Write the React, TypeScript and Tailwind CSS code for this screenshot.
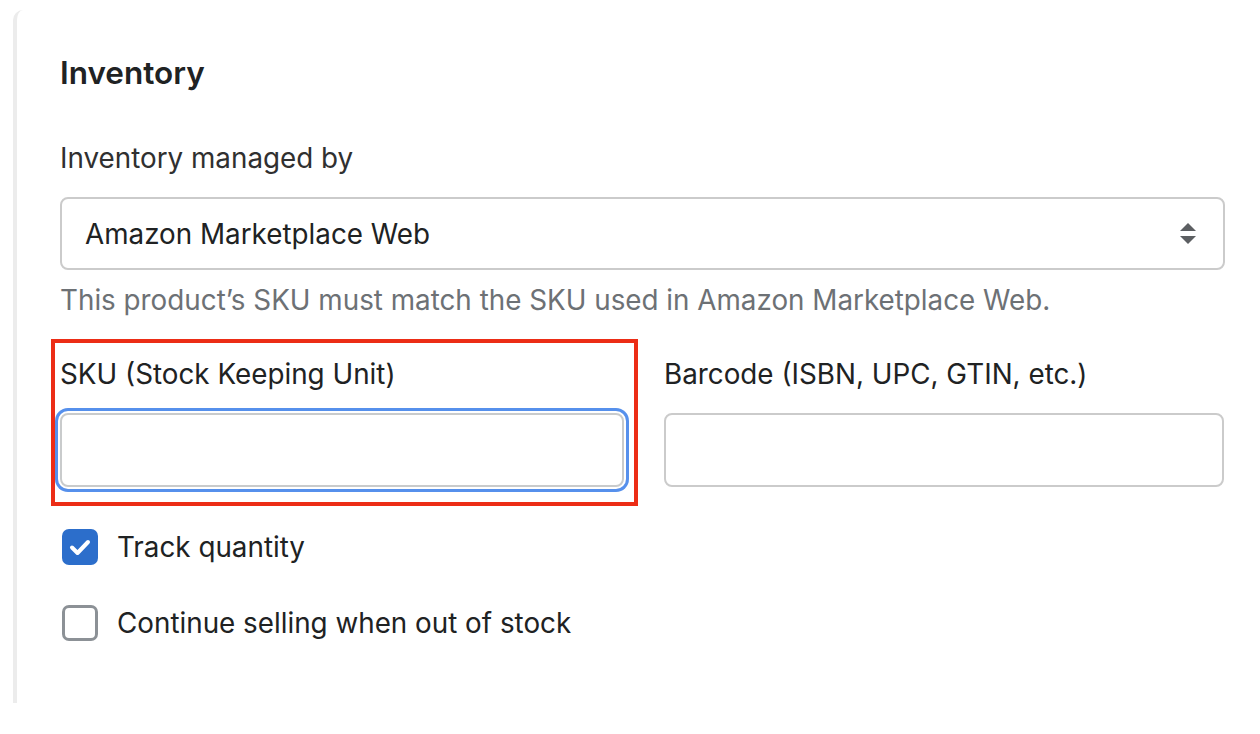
export default function App() {
  return (
    <div
      className="min-h-[734px] w-[1260px] bg-white pl-[13px] pt-[10px] text-[#202223]"
      style={{ fontFamily: "Inter, 'Liberation Sans', sans-serif" }}
    >
      <div className="h-[693px] rounded-tl-[10px] border-l-[4px] border-[#ececec] pl-[43px] pr-[35px] pt-[45px]">
        <h2 className="text-[31.5px] font-semibold leading-[36px]">Inventory</h2>

        <label className="mt-[51px] block text-[27.8px] leading-[32px] text-[#303030]">
          Inventory managed by
        </label>
        <div className="mt-[23px] flex h-[73px] items-center justify-between rounded-[8px] border-2 border-[#cbcbcb] pl-[23px] pr-[26px]">
          <span className="text-[27.8px] leading-[32px]">Amazon Marketplace Web</span>
          <svg width="18" height="26" viewBox="0 0 18 26" fill="#5c5f62">
            <path d="M9 2 L17 10 L1 10 Z" />
            <path d="M1 15 L17 15 L9 23 Z" />
          </svg>
        </div>
        <p className="mt-[14px] text-[27.8px] leading-[32px] text-[#6d7175]">
          This product’s SKU must match the SKU used in Amazon Marketplace Web.
        </p>

        <div className="mt-[42px] grid grid-cols-[564px_560px] gap-x-[40px]">
          <div className="relative">
            <div className="pointer-events-none absolute -bottom-[19px] -left-[9px] -right-[14px] -top-[19px] border-[4px] border-[#ec2d16]" />
            <label className="block text-[27.8px] leading-[32px]">SKU (Stock Keeping Unit)</label>
            <input
              className="mt-[23px] block h-[74px] w-full rounded-[8px] border-2 border-[#c9cbcc] bg-white px-4 text-[26px] outline-none ring-[3px] ring-[#5690ec] ring-offset-2"
              type="text"
            />
          </div>
          <div>
            <label className="block text-[27.8px] leading-[32px]">Barcode (ISBN, UPC, GTIN, etc.)</label>
            <input
              className="mt-[23px] block h-[74px] w-full rounded-[8px] border-2 border-[#cbcbcb] bg-white px-4 text-[26px] outline-none"
              type="text"
            />
          </div>
        </div>

        <div className="mt-[42px] flex flex-col gap-[40px] pl-[2px]">
          <label className="flex items-center gap-[19px]">
            <span className="flex h-[36px] w-[36px] items-center justify-center rounded-[7px] bg-[#2c6ecb]">
              <svg width="28" height="28" viewBox="0 0 28 28" fill="none" stroke="white" strokeWidth="4" strokeLinecap="round" strokeLinejoin="round">
                <path d="M6 14.5 L11.5 20 L22 9" />
              </svg>
            </span>
            <span className="text-[27.8px] leading-[32px]">Track quantity</span>
          </label>
          <label className="flex items-center gap-[19px]">
            <span className="h-[36px] w-[36px] rounded-[7px] border-[3px] border-[#8c9196] bg-white" />
            <span className="text-[27.8px] leading-[32px]">Continue selling when out of stock</span>
          </label>
        </div>
      </div>
    </div>
  );
}
